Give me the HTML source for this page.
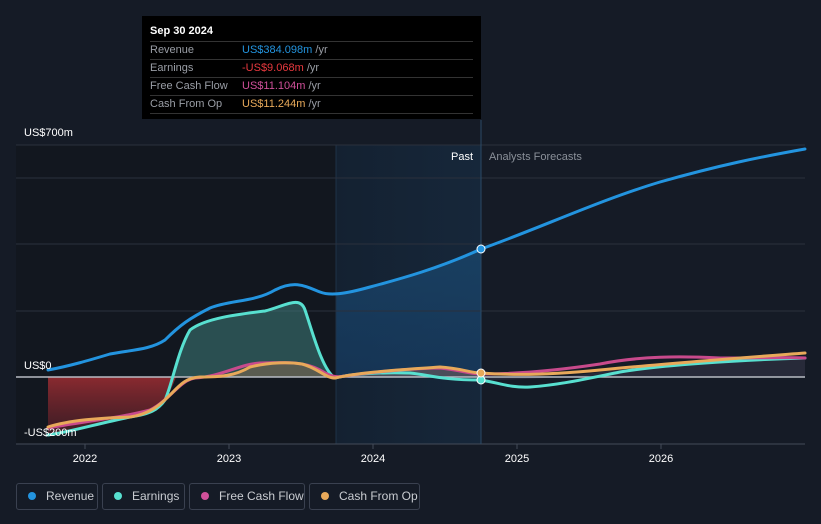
<!DOCTYPE html>
<html><head><meta charset="utf-8"><style>
body{margin:0;width:821px;height:524px;background:#151b26;font-family:"Liberation Sans",sans-serif;overflow:hidden;position:relative}
.tt{position:absolute;left:142px;top:16px;width:339px;height:103px;background:#000;color:#fff;font-size:11px}
.tt .h{padding:9px 0 0 8px;height:16px;font-weight:bold}
.tt .r{margin:0 8px;border-top:1px solid #333;height:17px;line-height:17px;display:flex}
.tt .r:last-child{border-bottom:1px solid #333}
.tt .l{width:92px;color:#9a9ea6}
.lg{position:absolute;top:483px;height:27px;border:1px solid #3a4150;border-radius:3px;color:#c9ccd1;font-size:12px;line-height:25px;box-sizing:border-box;white-space:nowrap}
.lg i{display:inline-block;width:8px;height:8px;border-radius:50%;margin:0 10px 0 11px;vertical-align:0}
</style></head><body>
<svg width="821" height="524" style="position:absolute;left:0;top:0">
<defs>
<linearGradient id="pg" x1="0" x2="1"><stop offset="0" stop-color="#142131"/><stop offset="1" stop-color="#16273a"/></linearGradient>
<linearGradient id="rv" x1="0" y1="0" x2="0" y2="1"><stop offset="0" stop-color="#1a4a72" stop-opacity="0.7"/><stop offset="1" stop-color="#17406a" stop-opacity="0.6"/></linearGradient>
<clipPath id="ab"><rect x="0" y="0" width="821" height="377"/></clipPath>
<clipPath id="be"><rect x="0" y="377" width="821" height="100"/></clipPath>
<clipPath id="pc"><rect x="336" y="145" width="145" height="299"/></clipPath>
<linearGradient id="rg" x1="0" y1="0" x2="0" y2="1"><stop offset="0" stop-color="#8a2a30"/><stop offset="1" stop-color="#5a2028" stop-opacity="0.6"/></linearGradient>
</defs>
<rect x="16" y="145" width="320" height="299" fill="#12171f"/>
<rect x="336" y="145" width="145" height="299" fill="url(#pg)"/>
<path clip-path="url(#pc)" d="M320,292 C330,296 345,294 370,287 C400,279 440,268 481,249 L481,377 L320,377Z" fill="url(#rv)"/>
<line x1="336" y1="145" x2="336" y2="444" stroke="#1e3247" stroke-width="1"/>
<g stroke="#2a303c" stroke-width="1">
<line x1="16" y1="145" x2="805" y2="145"/><line x1="16" y1="178" x2="805" y2="178"/><line x1="16" y1="244" x2="805" y2="244"/><line x1="16" y1="311" x2="805" y2="311"/>
</g>
<line x1="16" y1="444" x2="805" y2="444" stroke="#444b58"/>
<line x1="481" y1="120" x2="481" y2="444" stroke="#2a4a66"/>
<path d="M48,435 C70,432 100,423 130,417 C150,414 158,410 165,400 C172,385 178,350 190,330 C205,318 240,314 265,311 C285,306 300,295 305,310 C312,330 322,370 335,378 L335,377 L48,377Z" fill="#3e7e7a" fill-opacity="0.55" clip-path="url(#ab)"/>
<path d="M48,435 C70,432 100,423 130,417 C150,414 158,410 165,400 C170,392 173,385 176,377 L48,377Z" fill="url(#rg)" clip-path="url(#be)"/>
<path d="M190,378 C210,377 230,377 245,368 C260,362 290,362 300,364 C315,366 325,378 335,378 L335,377 L190,377Z" fill="#8a6a50" fill-opacity="0.5"/>
<path d="M345,376 C370,372 420,368 440,367 C460,368 470,373 481,373 L481,377 L345,377Z" fill="#8a6a60" fill-opacity="0.45"/>
<path d="M481,380 C520,380 560,378 600,372 C660,362 740,360 805,356 L805,377 L481,377Z" fill="#3a3a4c" fill-opacity="0.5"/>
<line x1="16" y1="377" x2="805" y2="377" stroke="#b8bcc4" stroke-width="1.5"/>
<g fill="none" stroke-width="3" stroke-linecap="round">
<path stroke="#2394df" d="M48,370 C70,366 90,360 110,354 C130,350 150,350 165,340 C180,325 190,318 210,308 C230,300 255,302 275,290 C295,280 305,286 320,292 C330,296 345,294 370,287 C400,279 440,268 481,249 C540,228 600,200 660,182 C720,165 760,157 805,149"/>
<path stroke="#58e0d0" d="M48,435 C70,432 100,423 130,417 C150,414 158,410 165,400 C172,385 178,350 190,330 C205,318 240,314 265,311 C285,306 300,295 305,310 C312,330 322,370 335,378 C350,374 380,372 410,373 C430,375 440,380 481,380 C500,383 510,388 530,387 C560,385 590,378 620,372 C660,365 740,360 805,358"/>
<path stroke="#c84a8c" d="M48,428 C80,422 120,418 150,410 C170,400 180,380 195,378 C220,377 240,364 260,363 C290,362 305,362 320,370 C330,376 335,378 345,376 C370,372 420,368 440,368 C460,370 470,374 481,374 C520,374 560,370 600,364 C640,356 680,356 720,358 C760,358 790,357 805,358"/>
<path stroke="#e8a95a" d="M48,427 C70,420 100,418 130,417 C150,414 160,405 170,395 C180,385 185,378 200,377 C220,377 235,376 250,367 C270,362 290,362 302,364 C318,368 325,378 335,378 C360,372 400,370 440,367 C460,368 470,373 481,373 C520,376 560,374 600,370 C660,364 740,358 805,353"/>
</g>
<circle cx="481" cy="249" r="4" fill="#2394df" stroke="#fff" stroke-width="1"/>
<circle cx="481" cy="380" r="4" fill="#58e0d0" stroke="#fff" stroke-width="1"/>
<circle cx="481" cy="373" r="4" fill="#e8a95a" stroke="#fff" stroke-width="1"/>
<g fill="#fff" font-size="11" font-family="Liberation Sans">
<text x="24" y="136">US$700m</text>
<text x="24" y="369">US$0</text>
<text x="24" y="436">-US$200m</text>
<text x="85" y="462" text-anchor="middle">2022</text>
<text x="229" y="462" text-anchor="middle">2023</text>
<text x="373" y="462" text-anchor="middle">2024</text>
<text x="517" y="462" text-anchor="middle">2025</text>
<text x="661" y="462" text-anchor="middle">2026</text>
<text x="473" y="160" text-anchor="end">Past</text>
<text x="489" y="160" fill="#8a9099">Analysts Forecasts</text>
</g>
<g stroke="#444b58"><line x1="85" y1="444" x2="85" y2="449"/><line x1="229" y1="444" x2="229" y2="449"/><line x1="373" y1="444" x2="373" y2="449"/><line x1="517" y1="444" x2="517" y2="449"/><line x1="661" y1="444" x2="661" y2="449"/></g>
</svg>
<div class="tt">
<div class="h">Sep 30 2024</div>
<div class="r"><span class="l">Revenue</span><span style="color:#2394df">US$384.098m</span>&nbsp;<span style="color:#9a9ea6">/yr</span></div>
<div class="r"><span class="l">Earnings</span><span style="color:#e8393f">-US$9.068m</span>&nbsp;<span style="color:#9a9ea6">/yr</span></div>
<div class="r"><span class="l">Free Cash Flow</span><span style="color:#d0509a">US$11.104m</span>&nbsp;<span style="color:#9a9ea6">/yr</span></div>
<div class="r"><span class="l">Cash From Op</span><span style="color:#e8a95a">US$11.244m</span>&nbsp;<span style="color:#9a9ea6">/yr</span></div>
</div>
<div class="lg" style="left:16px;width:82px"><i style="background:#2394df"></i>Revenue</div>
<div class="lg" style="left:102px;width:83px"><i style="background:#58e0d0"></i>Earnings</div>
<div class="lg" style="left:189px;width:116px"><i style="background:#d0509a"></i>Free Cash Flow</div>
<div class="lg" style="left:309px;width:111px"><i style="background:#e8a95a"></i>Cash From Op</div>
</body></html>
